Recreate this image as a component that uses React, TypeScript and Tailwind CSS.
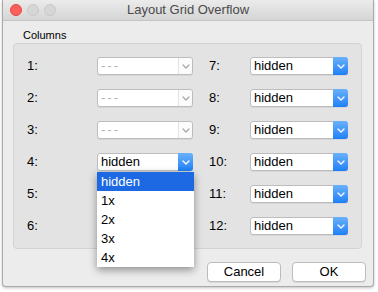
import React from "react";

const font = { fontFamily: '"Liberation Sans", Arial, sans-serif' };

function Chevron({ color }: { color: string }) {
  return (
    <svg width="8" height="5" viewBox="0 0 8 5">
      <path d="M1 1 L4 4 L7 1" fill="none" stroke={color} strokeWidth="1.3" strokeLinecap="round" strokeLinejoin="round" />
    </svg>
  );
}

function Combo({ value, disabled, width }: { value: string; disabled?: boolean; width: string }) {
  return (
    <div className={`flex h-[18px] ${width} rounded-[3px] border border-[#bdbdbd] bg-white shadow-[0_1px_0_rgba(0,0,0,0.06)]`}>
      <div
        className={`flex-1 pl-[3px] text-[13px] leading-[16px] ${disabled ? "tracking-[2px] text-[#b4b4b4]" : "text-black"}`}
      >
        {value}
      </div>
      {disabled ? (
        <div className="flex w-[14px] items-center justify-center rounded-r-[3px] border-l border-[#e2e2e2] bg-[#fbfbfb]">
          <Chevron color="#a8a8a8" />
        </div>
      ) : (
        <div className="-my-px -mr-px flex w-[15px] items-center justify-center rounded-r-[3px] bg-gradient-to-b from-[#69b1fb] to-[#1a7ff5]">
          <Chevron color="#ffffff" />
        </div>
      )}
    </div>
  );
}

export default function App() {
  const left = [
    { l: "1:", v: "---", d: true },
    { l: "2:", v: "---", d: true },
    { l: "3:", v: "---", d: true },
    { l: "4:", v: "hidden" },
    { l: "5:", v: "hidden" },
    { l: "6:", v: "hidden" },
  ];
  const right = ["7:", "8:", "9:", "10:", "11:", "12:"];
  return (
    <div className="h-[292px] w-[378px] bg-white" style={font}>
      <div className="relative ml-[2px] h-[287px] w-[372px] overflow-hidden rounded-b-[4px] border-x border-b border-[#a9a9a9] bg-[#ececec] shadow-[0_1px_3px_rgba(0,0,0,0.25)]">
        <div className="relative flex h-[21px] items-center border-b border-[#c4c4c4] bg-gradient-to-b from-[#ebebeb] to-[#d5d5d5]">
          <div className="flex items-center gap-[5px] pl-[7px]">
            <div className="h-[12px] w-[12px] rounded-full border border-[#e2463f] bg-[#fc605c]" />
            <div className="h-[12px] w-[12px] rounded-full border border-[#c9c9c9] bg-[#d6d6d6]" />
            <div className="h-[12px] w-[12px] rounded-full border border-[#c9c9c9] bg-[#d6d6d6]" />
          </div>
          <div className="absolute inset-0 flex items-center justify-center text-[13px] text-[#4a4a4a]">
            Layout Grid Overflow
          </div>
        </div>
        <div className="pl-[20px] pt-[8px] text-[11px] leading-[13px] text-black">Columns</div>
        <div className="ml-[10px] mt-[1px] w-[349px] rounded-[4px] border border-[#d3d3d3] bg-[#e3e3e3] px-[13px] py-[13px]">
          <div className="flex gap-[16px]">
            <div className="flex flex-col gap-[14px]">
              {left.map((r) => (
                <div key={r.l} className="flex items-center">
                  <div className="w-[70px] text-[13px] leading-[18px] text-black">{r.l}</div>
                  <Combo value={r.v} disabled={r.d} width="w-[96px]" />
                </div>
              ))}
            </div>
            <div className="flex flex-col gap-[14px]">
              {right.map((l) => (
                <div key={l} className="flex items-center">
                  <div className="w-[41px] text-[13px] leading-[18px] text-black">{l}</div>
                  <Combo value="hidden" width="w-[98px]" />
                </div>
              ))}
            </div>
          </div>
        </div>
        <div className="mt-[13px] flex justify-end gap-[11px] pr-[7px]">
          <div className="flex h-[20px] w-[74px] items-center justify-center rounded-[4px] border border-[#bcbcbc] bg-white text-[13px] text-black shadow-[0_1px_0_rgba(0,0,0,0.08)]">
            Cancel
          </div>
          <div className="flex h-[20px] w-[74px] items-center justify-center rounded-[4px] border border-[#bcbcbc] bg-white text-[13px] text-black shadow-[0_1px_0_rgba(0,0,0,0.08)]">
            OK
          </div>
        </div>
        <div className="absolute left-[94px] top-[172px] w-[97px] bg-white shadow-[0_3px_8px_rgba(0,0,0,0.4)]">
          {["hidden", "1x", "2x", "3x", "4x"].map((t, i) => (
            <div
              key={t}
              className={`h-[19px] pl-[4px] text-[13px] leading-[19px] ${i === 0 ? "bg-[#1d69e3] text-white" : "text-black"}`}
            >
              {t}
            </div>
          ))}
        </div>
      </div>
    </div>
  );
}
